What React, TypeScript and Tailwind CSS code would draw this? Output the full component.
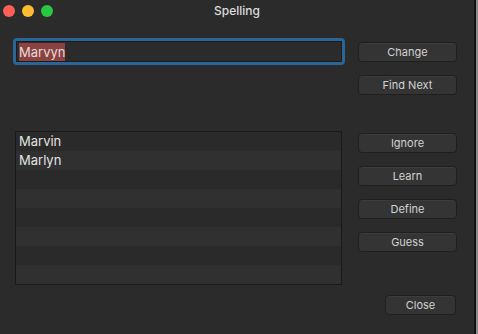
import React from "react";

const suggestions = ["Marvin", "Marlyn"];

function Btn({ label, className = "" }: { label: string; className?: string }) {
  return (
    <button
      className={`h-[20px] rounded-[4px] border border-[#1f1f1f] bg-[#343434] text-[11px] text-[#d2d2d2] shadow-[inset_0_1px_0_#3c3c3c] ${className}`}
    >
      {label}
    </button>
  );
}

export default function App() {
  const rows = Array.from({ length: 8 }, (_, i) => suggestions[i] || "");

  return (
    <div
      className="flex h-[334px] w-[478px] bg-[#2b2b2b]"
      style={{ fontFamily: "Inter, 'Liberation Sans', sans-serif" }}
    >
      <div className="flex w-[474px] flex-col rounded-tr-[6px] bg-[#2b2b2b]">
        {/* title bar */}
        <div className="relative flex h-[20px] items-center">
          <div className="flex gap-[7px] pl-[3px] pt-[1px]">
            <span className="h-[12px] w-[12px] rounded-full bg-[#fe5f57]" />
            <span className="h-[12px] w-[12px] rounded-full bg-[#febc2e]" />
            <span className="h-[12px] w-[12px] rounded-full bg-[#28c840]" />
          </div>
          <div className="absolute inset-x-0 top-[2px] text-center text-[12px] font-medium text-[#dcdcdc]">
            Spelling
          </div>
        </div>

        <div className="flex">
          {/* left */}
          <div className="ml-[13px] flex w-[332px] flex-col">
            <div className="mt-[18px] h-[27px] rounded-[4px] border-[3px] border-[#2a6597] bg-[#2b2b2b]">
              <div className="flex h-full items-center border border-[#1c1c1c] pl-[2px]">
                <span className="bg-[#8a4341] text-[13px] leading-[18px] text-[#e8dada]">Marvyn</span>
              </div>
            </div>
            <div className="ml-[2px] mt-[66px] w-[327px] border border-[#1a1a1a]">
              {rows.map((r, i) => (
                <div
                  key={i}
                  className={`h-[19px] pl-[3px] text-[13px] leading-[19px] text-[#e2e2e2] ${
                    i % 2 === 0 ? "bg-[#2a2a2a]" : "bg-[#303030]"
                  }`}
                >
                  {r}
                </div>
              ))}
            </div>
          </div>

          {/* right */}
          <div className="ml-[13px] flex w-[99px] flex-col">
            <Btn label="Change" className="mt-[22px]" />
            <Btn label="Find Next" className="mt-[13px]" />
            <Btn label="Ignore" className="mt-[38px]" />
            <Btn label="Learn" className="mt-[13px]" />
            <Btn label="Define" className="mt-[13px]" />
            <Btn label="Guess" className="mt-[13px]" />
            <Btn label="Close" className="ml-[27px] mt-[43px] w-[71px]" />
          </div>
        </div>
      </div>
      <div className="w-[2px] bg-[#111111]" />
      <div className="w-[2px] bg-[#8a8a8a]" />
    </div>
  );
}
